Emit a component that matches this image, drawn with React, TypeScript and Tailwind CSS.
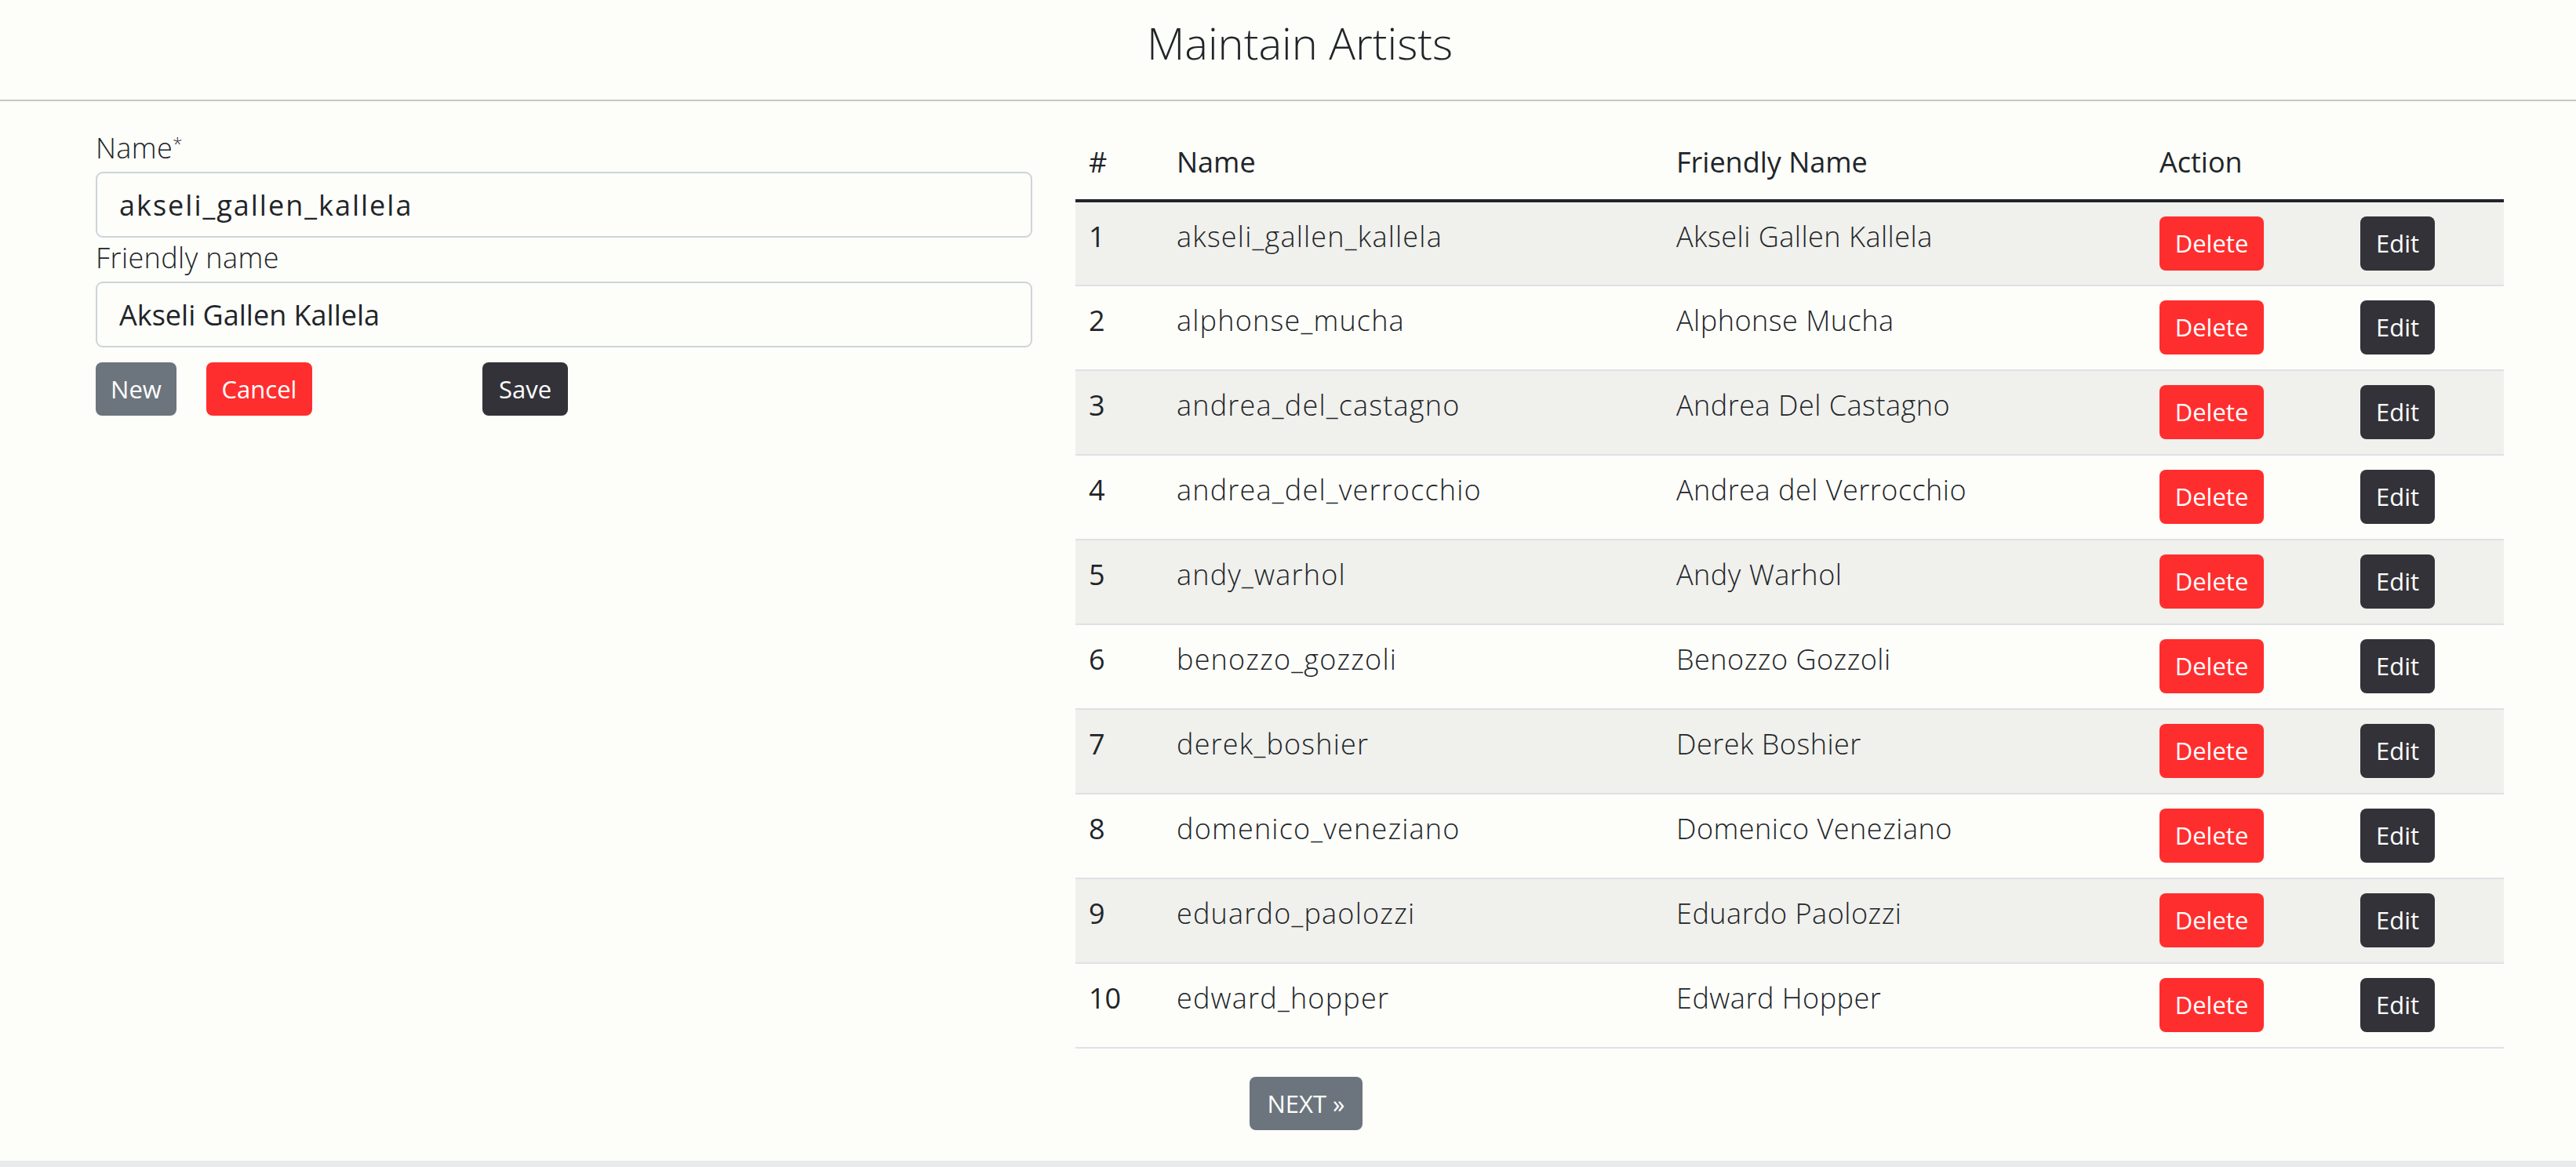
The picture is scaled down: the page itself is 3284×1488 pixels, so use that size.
import React, { useState } from 'react';

type Artist = { id: number; name: string; friendly: string };

const ARTISTS: Artist[] = [
  { id: 1, name: 'akseli_gallen_kallela', friendly: 'Akseli Gallen Kallela' },
  { id: 2, name: 'alphonse_mucha', friendly: 'Alphonse Mucha' },
  { id: 3, name: 'andrea_del_castagno', friendly: 'Andrea Del Castagno' },
  { id: 4, name: 'andrea_del_verrocchio', friendly: 'Andrea del Verrocchio' },
  { id: 5, name: 'andy_warhol', friendly: 'Andy Warhol' },
  { id: 6, name: 'benozzo_gozzoli', friendly: 'Benozzo Gozzoli' },
  { id: 7, name: 'derek_boshier', friendly: 'Derek Boshier' },
  { id: 8, name: 'domenico_veneziano', friendly: 'Domenico Veneziano' },
  { id: 9, name: 'eduardo_paolozzi', friendly: 'Eduardo Paolozzi' },
  { id: 10, name: 'edward_hopper', friendly: 'Edward Hopper' },
];

const btn = 'rounded-[8px] text-white text-[31px] leading-none font-normal text-center';

const App: React.FC = () => {
  const [name, setName] = useState('akseli_gallen_kallela');
  const [friendly, setFriendly] = useState('Akseli Gallen Kallela');

  return (
    <div className="h-screen overflow-hidden flex flex-col bg-[#fdfdf9] text-[#212529] font-['Open_Sans',sans-serif]">
      {/* header */}
      <div className="h-[129px] shrink-0 border-b-2 border-[#c8c8c2] flex justify-center pt-[26px] pl-[30px]">
        <h1 className="text-[56px] leading-none font-light">Maintain Artists</h1>
      </div>

      <div className="flex pt-[34px] pl-[122px]">
        {/* form */}
        <div className="w-[1194px] flex flex-col">
          <label className="h-[56px] pt-[8px] text-[36px] leading-none font-light tracking-[0.4px]">
            Name<sup className="text-[22px] font-light">*</sup>
          </label>
          <input
            value={name}
            onChange={(e) => setName(e.target.value)}
            className="h-[84px] border-2 border-[#ced4da] rounded-[9px] px-[28px] text-[36px] font-medium tracking-[2px] outline-none bg-transparent"
          />
          <label className="h-[56px] pt-[8px] text-[36px] leading-none font-light tracking-[0.4px]">Friendly name</label>
          <input
            value={friendly}
            onChange={(e) => setFriendly(e.target.value)}
            className="h-[84px] border-2 border-[#ced4da] rounded-[9px] px-[28px] text-[36px] font-medium outline-none bg-transparent"
          />
          <div className="flex mt-[19px]">
            <button className={`${btn} h-[68px] w-[103px] bg-[#6c757d]`}>New</button>
            <button className={`${btn} h-[68px] w-[135px] bg-[#ff2e2e] ml-[38px]`}>Cancel</button>
            <button className={`${btn} h-[68px] w-[109px] bg-[#323238] ml-[217px]`}>Save</button>
          </div>
        </div>

        {/* list */}
        <div className="ml-[55px] w-[1821px] flex flex-col">
          <table className="table-fixed w-full border-collapse">
            <colgroup>
              <col className="w-[112px]" />
              <col className="w-[637px]" />
              <col className="w-[616px]" />
              <col className="w-[256px]" />
              <col className="w-[200px]" />
            </colgroup>
            <thead>
              <tr className="border-b-4 border-[#212529]">
                <th className="h-[93px] align-bottom text-left px-[17px] pb-[29px] text-[36px] leading-none font-normal">#</th>
                <th className="h-[93px] align-bottom text-left px-[17px] pb-[29px] text-[36px] leading-none font-normal">Name</th>
                <th className="h-[93px] align-bottom text-left px-[17px] pb-[29px] text-[36px] leading-none font-normal">Friendly Name</th>
                <th className="h-[93px] align-bottom text-left px-[17px] pb-[29px] text-[36px] leading-none font-normal">Action</th>
                <th className="h-[93px]" />
              </tr>
            </thead>
            <tbody>
              {ARTISTS.map((a) => (
                <tr key={a.id} className={`border-b-2 border-[#dee2e6] ${a.id % 2 === 1 ? 'bg-[#f0f0ec]' : ''}`}>
                  <td className="h-[108px] align-top px-[17px] pt-[26px] text-[36px] leading-none font-normal">{a.id}</td>
                  <td className="h-[108px] align-top px-[17px] pt-[26px] text-[36px] leading-none font-light tracking-[1.2px]">{a.name}</td>
                  <td className="h-[108px] align-top px-[17px] pt-[26px] text-[36px] leading-none font-light tracking-[0.5px]">{a.friendly}</td>
                  <td className="h-[108px] align-top px-[17px] pt-[18px]">
                    <button className={`${btn} h-[69px] w-[133px] bg-[#ff2e2e]`}>Delete</button>
                  </td>
                  <td className="h-[108px] align-top px-[17px] pt-[18px]">
                    <button className={`${btn} h-[69px] w-[95px] bg-[#323238]`}>Edit</button>
                  </td>
                </tr>
              ))}
            </tbody>
          </table>
          <div className="pt-[36px] pl-[222px] flex">
            <button className={`${btn} h-[68px] w-[144px] bg-[#6c757d]`}>NEXT »</button>
          </div>
        </div>
      </div>

      <div className="flex-1" />
      <div className="h-[8px] shrink-0 bg-[#e8eaee]" />
    </div>
  );
};

export default App;
